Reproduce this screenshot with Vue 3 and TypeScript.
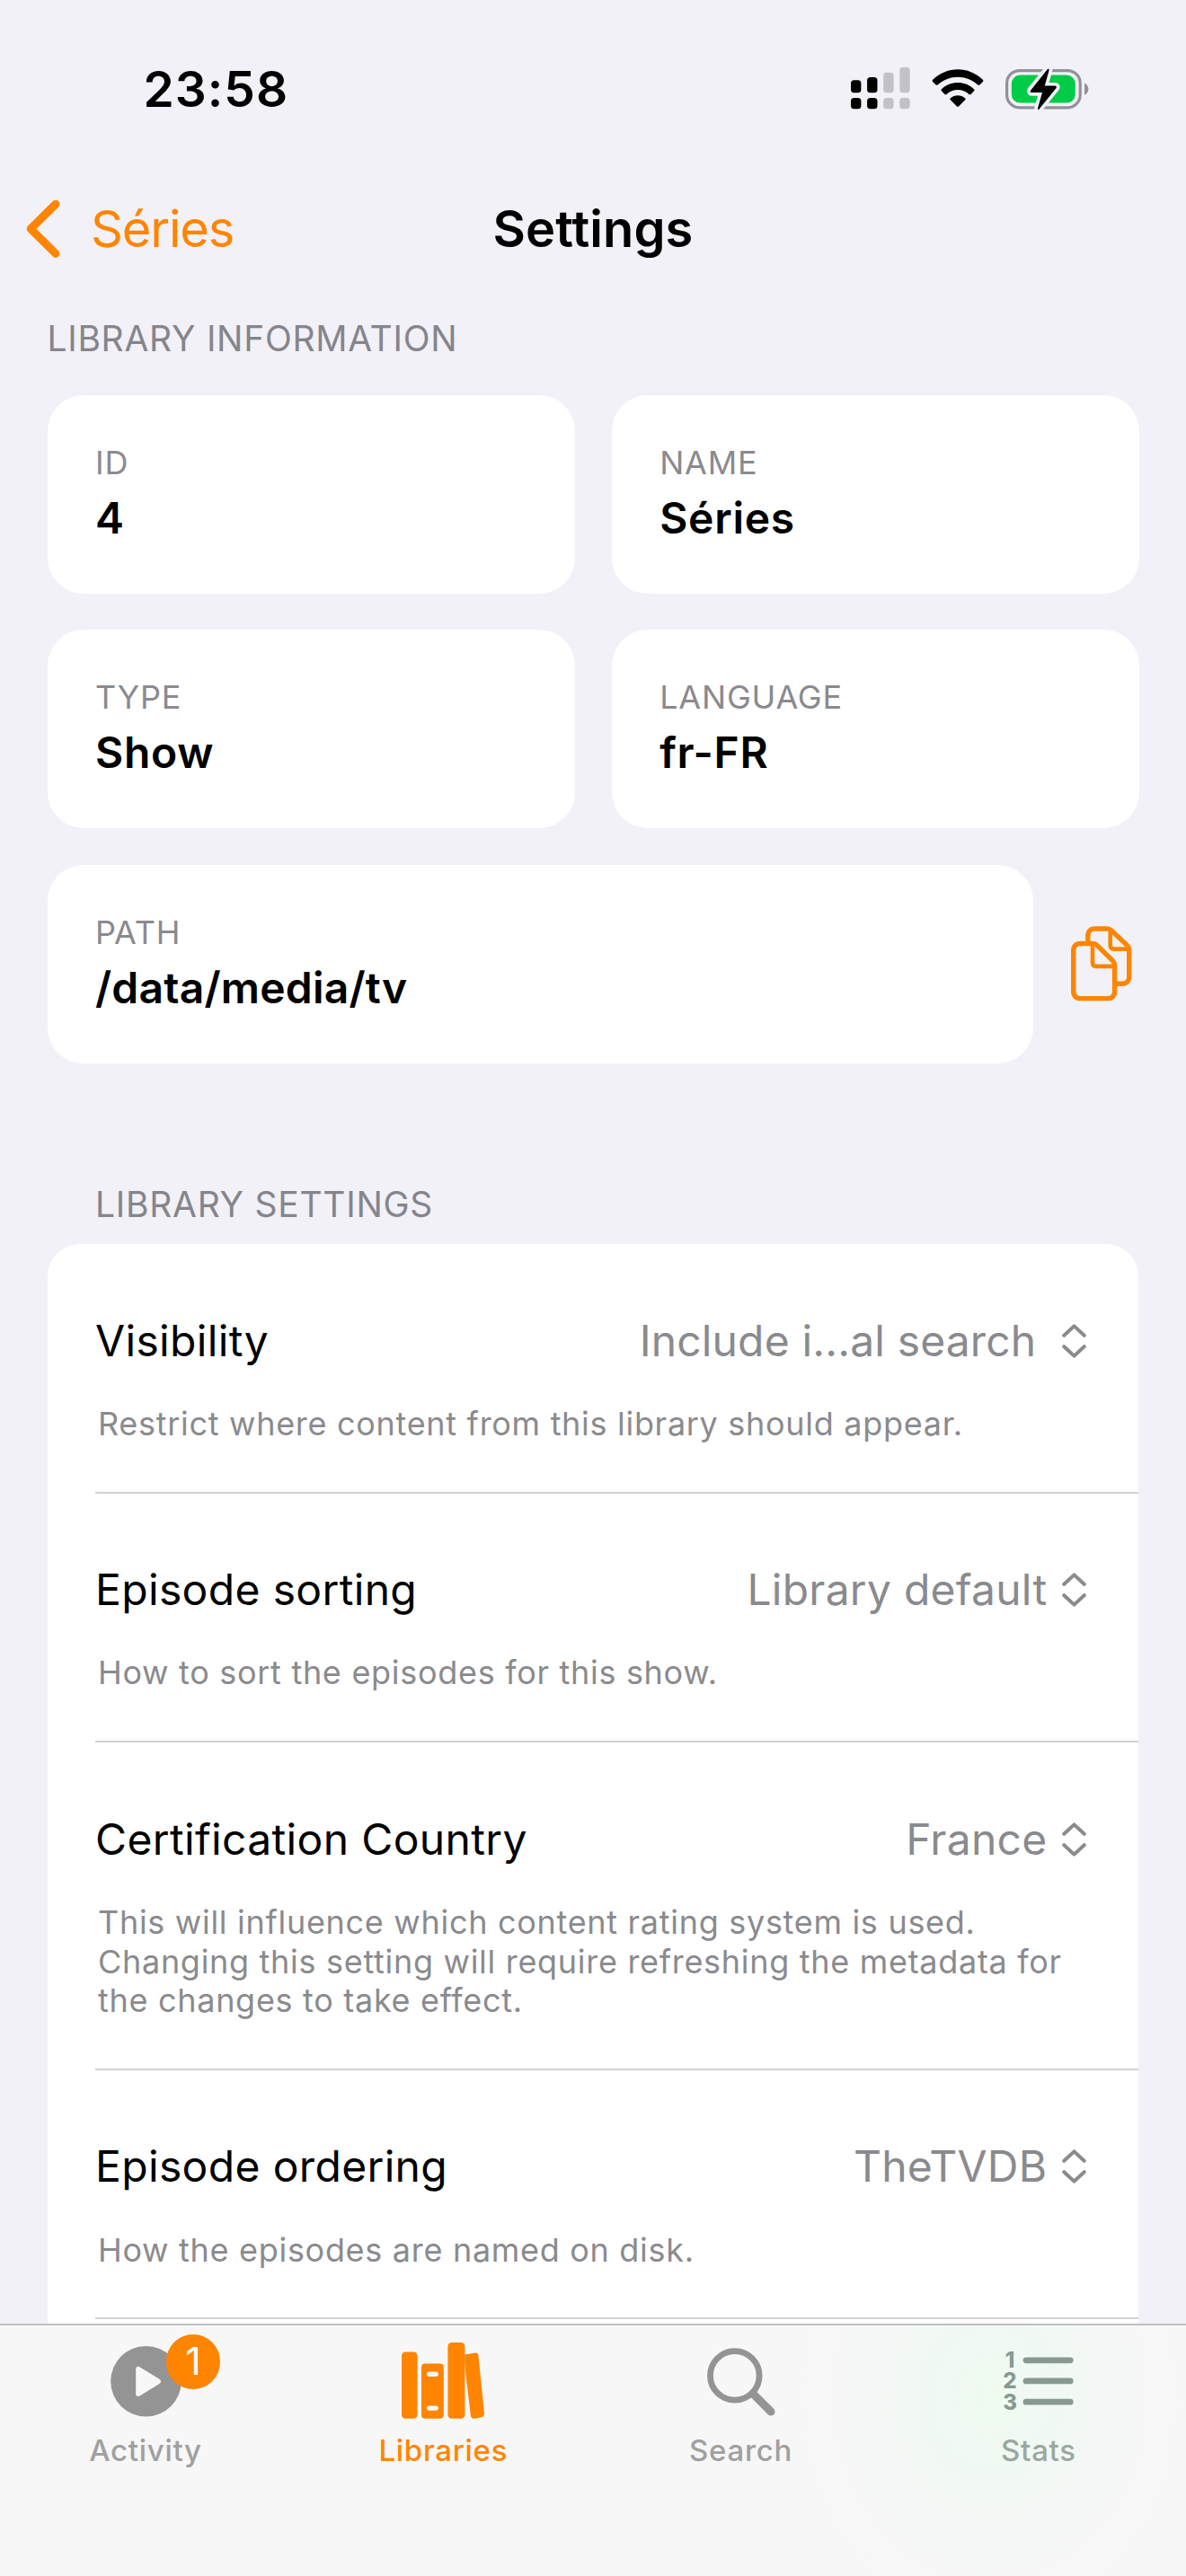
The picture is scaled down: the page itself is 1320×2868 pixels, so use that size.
<script setup lang="ts">
interface InfoCard {
  label: string
  value: string
}

interface SettingRow {
  title: string
  value: string
  hint: string
  truncated?: boolean
}

type TabId = 'activity' | 'libraries' | 'search' | 'stats'

interface Tab {
  id: TabId
  label: string
  badge?: number
}

const info: InfoCard[] = [
  { label: 'ID', value: '4' },
  { label: 'NAME', value: 'Séries' },
  { label: 'TYPE', value: 'Show' },
  { label: 'LANGUAGE', value: 'fr-FR' },
]

const path: InfoCard = { label: 'PATH', value: '/data/media/tv' }

const settings: SettingRow[] = [
  {
    title: 'Visibility',
    value: 'Include i...al search',
    hint: 'Restrict where content from this library should appear.',
    truncated: true,
  },
  {
    title: 'Episode sorting',
    value: 'Library default',
    hint: 'How to sort the episodes for this show.',
  },
  {
    title: 'Certification Country',
    value: 'France',
    hint: 'This will influence which content rating system is used. Changing this setting will require refreshing the metadata for the changes to take effect.',
  },
  {
    title: 'Episode ordering',
    value: 'TheTVDB',
    hint: 'How the episodes are named on disk.',
  },
]

const tabs: Tab[] = [
  { id: 'activity', label: 'Activity', badge: 1 },
  { id: 'libraries', label: 'Libraries' },
  { id: 'search', label: 'Search' },
  { id: 'stats', label: 'Stats' },
]

const activeTab: TabId = 'libraries'
</script>

<template>
  <div class="screen">
    <header class="status">
      <span class="clock">23:58</span>
      <div class="indicators">
        <svg class="signal" width="66" height="47" viewBox="0 0 66 47">
          <g fill="#000">
            <rect x="0" y="14.3" width="11.4" height="14" rx="3.6" />
            <rect x="18.1" y="11" width="11.4" height="17.3" rx="3.6" />
            <rect x="0" y="34" width="11.4" height="12.3" rx="3.6" />
            <rect x="18.1" y="34" width="11.4" height="12.3" rx="3.6" />
          </g>
          <g fill="#c2c1c6">
            <rect x="36.2" y="5.7" width="11.4" height="22.6" rx="3.6" />
            <rect x="54.3" y="0" width="11.4" height="28.3" rx="3.6" />
            <rect x="36.2" y="34" width="11.4" height="12.3" rx="3.6" />
            <rect x="54.3" y="34" width="11.4" height="12.3" rx="3.6" />
          </g>
        </svg>
        <svg class="wifi" width="58" height="44" viewBox="0 0 58 44">
          <path d="M1.2 11.8C17 -3.6 41 -3.6 56.8 11.8C57.5 12.5 57.5 13.3 56.9 13.9L53.4 17.4C52.8 18 52 18 51.4 17.4C38.8 5.7 19.2 5.7 6.6 17.4C6 18 5.2 18 4.6 17.4L1.1 13.9C0.5 13.3 0.5 12.5 1.2 11.8Z" />
          <path d="M11 22.2C21 12.6 37 12.6 47 22.2C47.7 22.9 47.7 23.7 47.1 24.3L43.5 27.9C42.9 28.5 42.1 28.4 41.5 27.9C34.6 21.4 23.4 21.4 16.5 27.9C15.9 28.4 15.1 28.5 14.5 27.9L10.9 24.3C10.3 23.7 10.3 22.9 11 22.2Z" />
          <path d="M20.9 32.2C25.3 28.1 32.7 28.1 37.1 32.2C37.8 32.8 37.8 33.6 37.1 34.3L30 41.4C29.4 42 28.6 42 28 41.4L20.9 34.3C20.2 33.6 20.2 32.8 20.9 32.2Z" />
        </svg>
        <svg class="battery" width="94" height="48" viewBox="0 0 94 48">
          <rect x="1.6" y="3.6" width="81.6" height="41.2" rx="14" fill="none" stroke="#929196" stroke-width="3.2" />
          <path d="M88 17.6C90.4 18.8 92.4 21.2 92.4 24.2C92.4 27.2 90.4 29.6 88 30.8Z" fill="#929196" />
          <rect x="6.8" y="8.6" width="71" height="31" rx="9.5" fill="#00cc47" />
          <path d="M46.7 2.2L28.2 25.4C27.2 26.7 27.8 28 29.4 28H41L36 45.6C35.6 47 36.8 47.4 37.6 46.4L56.4 23.2C57.4 21.9 56.8 20.6 55.2 20.6H43.8L48.6 3.2C49 1.8 47.6 1.2 46.7 2.2Z" fill="#000" stroke="#f2f1f7" stroke-width="7.4" stroke-linejoin="round" paint-order="stroke" />
        </svg>
      </div>
    </header>

    <nav class="navbar">
      <a class="back">
        <svg width="38" height="66" viewBox="0 0 38 66">
          <path d="M33 5.2L5.2 32.8L33 60.4" fill="none" stroke="#ff8500" stroke-width="9" stroke-linecap="round" stroke-linejoin="round" />
        </svg>
        <span>Séries</span>
      </a>
      <h1>Settings</h1>
      <span></span>
    </nav>

    <main class="content">
      <h2 class="section-title first">LIBRARY INFORMATION</h2>
      <section class="cards">
        <article v-for="card in info" :key="card.label" class="card">
          <span class="card-label">{{ card.label }}</span>
          <span class="card-value">{{ card.value }}</span>
        </article>
      </section>
      <section class="path-row">
        <article class="card path-card">
          <span class="card-label">{{ path.label }}</span>
          <span class="card-value path-value">{{ path.value }}</span>
        </article>
        <svg class="copy" width="68" height="84" viewBox="0 0 68 84" fill="none" stroke="#ff8500" stroke-width="5.4" stroke-linejoin="round">
          <path d="M18.8 17V10.7C18.8 6 21.8 3 26.5 3H40C42 3 43.6 3.6 45 5L62.4 21.4C64 23 64.7 24.6 64.7 26.8V56.5C64.7 61.2 61.7 64.2 57 64.2H51" />
          <path d="M43.7 3.5V21.5C43.7 24.3 45 25.6 47.8 25.6H64" stroke-width="4.6" />
          <path d="M10.4 19.5H24.2C26.2 19.5 27.8 20.2 29.2 21.6L46.2 38.4C47.8 40 48.6 41.6 48.6 43.8V72.8C48.6 77.6 45.6 80.6 40.9 80.6H10.4C5.7 80.6 2.7 77.6 2.7 72.8V27.2C2.7 22.5 5.7 19.5 10.4 19.5Z" />
          <path d="M24 20V40.8C24 43.6 25.3 44.9 28.1 44.9H48" stroke-width="4.6" />
        </svg>
      </section>

      <h2 class="section-title second">LIBRARY SETTINGS</h2>
      <section class="list">
        <div v-for="row in settings" :key="row.title" class="row">
          <div class="row-main">
            <span class="row-title">{{ row.title }}</span>
            <span class="row-value" :class="{ truncated: row.truncated }">{{ row.value }}</span>
            <svg class="updown" width="27" height="38" viewBox="0 0 27 38" fill="none" stroke="#8a8a8e" stroke-width="4" stroke-linecap="round" stroke-linejoin="round">
              <path d="M2.3 12.8L13.5 2.4L24.7 12.8" />
              <path d="M2.3 25.2L13.5 35.6L24.7 25.2" />
            </svg>
          </div>
          <p class="row-hint">{{ row.hint }}</p>
        </div>
        <div class="row-tail"></div>
      </section>
    </main>

    <footer class="tabbar">
      <a v-for="tab in tabs" :key="tab.id" class="tab" :class="[tab.id, { active: tab.id === activeTab }]">
        <span class="tab-icon">
          <svg v-if="tab.id === 'activity'" width="79" height="90" viewBox="0 0 79 90">
            <circle cx="39.5" cy="47.3" r="39.3" fill="#949494" />
            <path d="M28.2 33.6C28.2 31.2 30.4 30 32.4 31.2L54.4 44.8C56.6 46.2 56.6 48.6 54.4 50L32.4 63.6C30.4 64.8 28.2 63.6 28.2 61.2Z" fill="#f7f7f7" />
          </svg>
          <svg v-else-if="tab.id === 'libraries'" width="92" height="90" viewBox="0 0 92 90" fill="#ff8500">
            <rect x="0" y="14.5" width="17.6" height="74.3" rx="4.4" />
            <path fill-rule="evenodd" d="M26.2 27.6H42.6Q46.8 27.6 46.8 31.8V84.6Q46.8 88.8 42.6 88.8H26.2Q22 88.8 22 84.6V31.8Q22 27.6 26.2 27.6ZM30.6 36.6Q28 36.6 28 39.3Q28 42 30.6 42H38.3Q40.9 42 40.9 39.3Q40.9 36.6 38.3 36.6ZM30.6 74.4Q28 74.4 28 77.1Q28 79.8 30.6 79.8H38.3Q40.9 79.8 40.9 77.1Q40.9 74.4 38.3 74.4Z" />
            <rect x="51.4" y="4" width="19" height="84.8" rx="4.4" />
            <path d="M70.2 17.6L81.2 15.7Q85 15 85.5 19L92 83Q92.4 86.6 88.8 87.3L81.6 88.7Q77.4 89.5 76.9 85.2L70.7 34Z" />
          </svg>
          <svg v-else-if="tab.id === 'search'" width="76" height="90" viewBox="0 0 76 90" fill="none" stroke="#949494">
            <circle cx="30.8" cy="40.9" r="27.3" stroke-width="6.8" />
            <path d="M51.4 61.4L71 81" stroke-width="9" stroke-linecap="round" />
          </svg>
          <svg v-else width="78" height="90" viewBox="0 0 78 90">
            <g class="digits" fill="#889a90">
              <text x="7" y="31.7" text-anchor="middle">1</text>
              <text x="7" y="55" text-anchor="middle">2</text>
              <text x="7" y="78.6" text-anchor="middle">3</text>
            </g>
            <path d="M25 23.8H74.2M25 46.9H74.2M25 70.2H74.2" stroke="#889a90" stroke-width="6.8" stroke-linecap="round" />
          </svg>
          <span v-if="tab.badge" class="badge">{{ tab.badge }}</span>
        </span>
        <span class="tab-label">{{ tab.label }}</span>
      </a>
    </footer>
  </div>
</template>

<style>
body {
  margin: 0;
  background: #f2f1f7;
}
</style>

<style scoped>
.screen {
  display: flex;
  flex-direction: column;
  box-sizing: border-box;
  width: 1320px;
  height: 2868px;
  overflow: hidden;
  background: #f2f1f7;
  color: #000;
  font-family: "Inter", "Liberation Sans", sans-serif;
}

h1,
h2,
p {
  margin: 0;
  font-weight: 400;
}

svg {
  display: block;
  flex: none;
}

/* Status bar */
.status {
  display: flex;
  flex: none;
  box-sizing: border-box;
  height: 198px;
  padding: 0 107px 0 159.5px;
  align-items: center;
  justify-content: space-between;
}

.clock {
  font-size: 55px;
  font-weight: 600;
  line-height: 66px;
  letter-spacing: 1px;
}

.indicators {
  display: flex;
  align-items: flex-start;
  height: 48px;
}

.signal {
  margin-right: 24px;
}

.wifi {
  margin: 2px 24px 0 0;
}

/* Navigation bar */
.navbar {
  display: grid;
  flex: none;
  grid-template-columns: 1fr auto 1fr;
  height: 114px;
  align-items: center;
}

.back {
  display: flex;
  align-items: center;
  gap: 34px;
  padding-left: 29px;
  color: #ff8500;
  font-size: 56px;
  letter-spacing: -1.2px;
}

h1 {
  font-size: 56px;
  font-weight: 600;
  letter-spacing: 0.1px;
}

/* Content */
.content {
  flex: 1;
  min-height: 0;
  overflow: hidden;
}

.section-title {
  color: #85858b;
  font-size: 39px;
  line-height: 60px;
  letter-spacing: 0.73px;
}

.first {
  padding: 34.5px 0 33.5px 52.4px;
}

.second {
  padding: 127.2px 0 14.4px 106px;
}

.cards {
  display: grid;
  grid-template-columns: 587.2px 587.2px;
  gap: 40.3px 41px;
  padding-left: 52.6px;
}

.card {
  display: flex;
  flex-direction: column;
  box-sizing: border-box;
  height: 221px;
  padding: 50px 53.4px 0;
  background: #fff;
  border-radius: 40px;
}

.card-label {
  color: #8a8a8e;
  font-size: 36px;
  line-height: 50px;
  letter-spacing: 0.8px;
}

.card-value {
  font-size: 48px;
  font-weight: 600;
  line-height: 73px;
  letter-spacing: 0.7px;
}

.path-value {
  letter-spacing: 0.19px;
}

.path-row {
  display: flex;
  align-items: center;
  padding: 40.3px 0 0 52.6px;
}

.path-card {
  width: 1097.7px;
  margin-right: 42px;
}

/* Settings list */
.list {
  width: 1214.8px;
  margin-left: 52.6px;
  background: #fff;
  border-radius: 36px 36px 0 0;
}

.row {
  display: flex;
  flex-direction: column;
  box-sizing: border-box;
  margin-left: 53.4px;
  padding: 77.6px 58px 52.8px 0;
  border-bottom: 2px solid #d2d2d4;
}

.row-tail {
  height: 60px;
}

.row-main {
  display: flex;
  align-items: center;
  height: 60px;
  font-size: 48px;
  line-height: 60px;
  letter-spacing: 0.35px;
}

.row-title {
  flex: 1;
}

.row-value {
  margin-right: 17px;
  color: #8a8a8e;
  letter-spacing: 0.25px;
}

.row-value.truncated {
  margin-right: 29px;
  letter-spacing: 0.15px;
}

.row-hint {
  padding: 41.2px 0 0 3px;
  color: #8a8a8e;
  font-size: 36px;
  line-height: 43.8px;
  letter-spacing: 0.7px;
}

/* Tab bar */
.tabbar {
  display: grid;
  flex: none;
  box-sizing: border-box;
  grid-template-columns: repeat(4, 324px);
  column-gap: 7.3px;
  height: 281px;
  padding-top: 15px;
  border-top: 2px solid #bfbfc3;
  background:
    radial-gradient(ellipse 220px 260px at 1102px 80px, #eefbf0 0%, rgba(239, 249, 242, 0.8) 30%, rgba(243, 248, 245, 0.45) 62%, rgba(247, 247, 247, 0) 100%),
    #f7f7f7;
}

.tab {
  display: flex;
  flex-direction: column;
  align-items: center;
  color: #a0a0a0;
}

.tab-icon {
  position: relative;
  height: 90px;
}

.tab-label {
  margin-top: 14px;
  font-size: 33px;
  font-weight: 500;
  line-height: 40px;
  letter-spacing: 0.7px;
}

.active .tab-label {
  color: #ff8500;
}

.stats .tab-label {
  color: #9aa8a0;
}

.stats .tab-icon {
  margin-left: 1px;
}

.digits text {
  font-family: "Inter", sans-serif;
  font-size: 24px;
  font-weight: 800;
}

.badge {
  position: absolute;
  top: -5.3px;
  left: 62px;
  width: 60.8px;
  height: 60.8px;
  border-radius: 50%;
  background: #ff8500;
  color: #fff;
  font-size: 43px;
  line-height: 59px;
  text-align: center;
}
</style>
